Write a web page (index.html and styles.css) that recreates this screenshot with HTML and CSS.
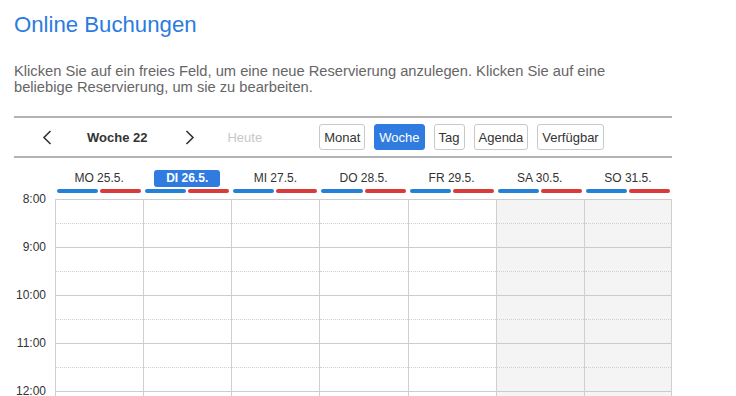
FILE: index.html
```html
<!DOCTYPE html>
<html lang="de">
<head>
<meta charset="utf-8">
<title>Online Buchungen</title>
<link rel="stylesheet" href="styles.css">
</head>
<body>
<div class="page">
  <h1 class="title">Online Buchungen</h1>
  <p class="intro">Klicken Sie auf ein freies Feld, um eine neue Reservierung anzulegen. Klicken Sie auf eine beliebige Reservierung, um sie zu bearbeiten.</p>

  <div class="calendar">
    <div class="toolbar">
      <button class="arrow prev" aria-label="Zurück">
        <svg width="10" height="15" viewBox="0 0 10 15"><path d="M8.5 1 L2 7.5 L8.5 14" fill="none" stroke="#333" stroke-width="1.6"/></svg>
      </button>
      <span class="week">Woche 22</span>
      <button class="arrow next" aria-label="Weiter">
        <svg width="10" height="15" viewBox="0 0 10 15"><path d="M1.5 1 L8 7.5 L1.5 14" fill="none" stroke="#333" stroke-width="1.6"/></svg>
      </button>
      <span class="today">Heute</span>
      <div class="views">
        <button class="view">Monat</button>
        <button class="view active">Woche</button>
        <button class="view">Tag</button>
        <button class="view">Agenda</button>
        <button class="view">Verfügbar</button>
      </div>
    </div>

    <div class="days">
      <div class="gutter"></div>
      <div class="day"><span class="label">MO 25.5.</span><div class="bars"><i class="bar blue"></i><i class="bar red"></i></div></div>
      <div class="day"><span class="label current">DI 26.5.</span><div class="bars"><i class="bar blue"></i><i class="bar red"></i></div></div>
      <div class="day"><span class="label">MI 27.5.</span><div class="bars"><i class="bar blue"></i><i class="bar red"></i></div></div>
      <div class="day"><span class="label">DO 28.5.</span><div class="bars"><i class="bar blue"></i><i class="bar red"></i></div></div>
      <div class="day"><span class="label">FR 29.5.</span><div class="bars"><i class="bar blue"></i><i class="bar red"></i></div></div>
      <div class="day"><span class="label">SA 30.5.</span><div class="bars"><i class="bar blue"></i><i class="bar red"></i></div></div>
      <div class="day"><span class="label">SO 31.5.</span><div class="bars"><i class="bar blue"></i><i class="bar red"></i></div></div>
    </div>

    <div class="body">
      <div class="times">
        <div class="time">8:00</div>
        <div class="time">9:00</div>
        <div class="time">10:00</div>
        <div class="time">11:00</div>
        <div class="time">12:00</div>
      </div>
      <div class="col"><div class="slot"></div><div class="slot half"></div><div class="slot"></div><div class="slot half"></div><div class="slot"></div><div class="slot half"></div><div class="slot"></div><div class="slot half"></div><div class="slot"></div><div class="slot half"></div></div>
      <div class="col"><div class="slot"></div><div class="slot half"></div><div class="slot"></div><div class="slot half"></div><div class="slot"></div><div class="slot half"></div><div class="slot"></div><div class="slot half"></div><div class="slot"></div><div class="slot half"></div></div>
      <div class="col"><div class="slot"></div><div class="slot half"></div><div class="slot"></div><div class="slot half"></div><div class="slot"></div><div class="slot half"></div><div class="slot"></div><div class="slot half"></div><div class="slot"></div><div class="slot half"></div></div>
      <div class="col"><div class="slot"></div><div class="slot half"></div><div class="slot"></div><div class="slot half"></div><div class="slot"></div><div class="slot half"></div><div class="slot"></div><div class="slot half"></div><div class="slot"></div><div class="slot half"></div></div>
      <div class="col"><div class="slot"></div><div class="slot half"></div><div class="slot"></div><div class="slot half"></div><div class="slot"></div><div class="slot half"></div><div class="slot"></div><div class="slot half"></div><div class="slot"></div><div class="slot half"></div></div>
      <div class="col weekend"><div class="slot"></div><div class="slot half"></div><div class="slot"></div><div class="slot half"></div><div class="slot"></div><div class="slot half"></div><div class="slot"></div><div class="slot half"></div><div class="slot"></div><div class="slot half"></div></div>
      <div class="col weekend last"><div class="slot"></div><div class="slot half"></div><div class="slot"></div><div class="slot half"></div><div class="slot"></div><div class="slot half"></div><div class="slot"></div><div class="slot half"></div><div class="slot"></div><div class="slot half"></div></div>
    </div>
  </div>
</div>
</body>
</html>
```

FILE: styles.css
```css
html, body {
  margin: 0;
  padding: 0;
  background: #fff;
  overflow: hidden;
}

body {
  font-family: "Liberation Sans", Arial, sans-serif;
  color: #333;
}

.page {
  width: 658px;
  padding: 0 14px;
}

.title {
  margin: 12px 0 0;
  font-size: 22.2px;
  line-height: 26px;
  font-weight: normal;
  color: #2b7bdf;
}

.intro {
  margin: 25px 0 0;
  max-width: 620px;
  font-size: 14.7px;
  line-height: 16px;
  color: #666;
}

.calendar {
  margin-top: 21px;
}

.toolbar {
  display: flex;
  align-items: center;
  height: 38px;
  border-top: 2px solid #b3b3b3;
  border-bottom: 2px solid #b3b3b3;
}

.arrow {
  display: flex;
  align-items: center;
  padding: 0;
  border: 0;
  background: none;
}

.prev { margin-left: 28px; }

.week {
  margin-left: 35px;
  font-size: 13px;
  font-weight: bold;
  color: #333;
}

.next { margin-left: 38px; }

.today {
  margin-left: 32px;
  font-size: 13px;
  color: #c8c8c8;
}

.views {
  display: flex;
  gap: 9px;
  margin-left: 57px;
}

.view {
  height: 26px;
  padding: 0 4px;
  border: 1px solid #c9c9c9;
  border-radius: 3px;
  background: #fff;
  font-family: "Liberation Sans", Arial, sans-serif;
  font-size: 13px;
  color: #333;
}

.view.active {
  background: #2f7be0;
  border-color: #2f7be0;
  color: #fff;
}

.days {
  display: grid;
  grid-template-columns: 41px repeat(7, 1fr);
  height: 41px;
}

.day {
  display: flex;
  flex-direction: column;
  align-items: center;
  padding-top: 12px;
}

.label {
  height: 17px;
  line-height: 17px;
  font-size: 12px;
  color: #333;
}

.label.current {
  padding: 0 12px;
  border-radius: 3px;
  background: #2f7be0;
  color: #fff;
  font-weight: bold;
}

.bars {
  display: flex;
  gap: 2px;
  align-self: stretch;
  padding: 0 2px;
  margin-top: 2px;
}

.bar {
  flex: 1;
  height: 4px;
  border-radius: 2px;
}

.bar.blue { background: #2581d7; }
.bar.red { background: #d93a3a; }

.body {
  display: grid;
  grid-template-columns: 41px repeat(7, 1fr);
}

.times {
  transform: translateY(-7px);
}

.time {
  height: 48px;
  padding-right: 9px;
  text-align: right;
  font-size: 12px;
  line-height: 14px;
  color: #333;
}

.col {
  border-left: 1px solid #cfcfcf;
}

.col.last {
  border-right: 1px solid #cfcfcf;
}

.col.weekend {
  background: #f4f4f4;
}

.slot {
  height: 23px;
  border-top: 1px solid #cccccc;
}

.slot.half {
  border-top: 1px dotted #cfcfcf;
}
```
